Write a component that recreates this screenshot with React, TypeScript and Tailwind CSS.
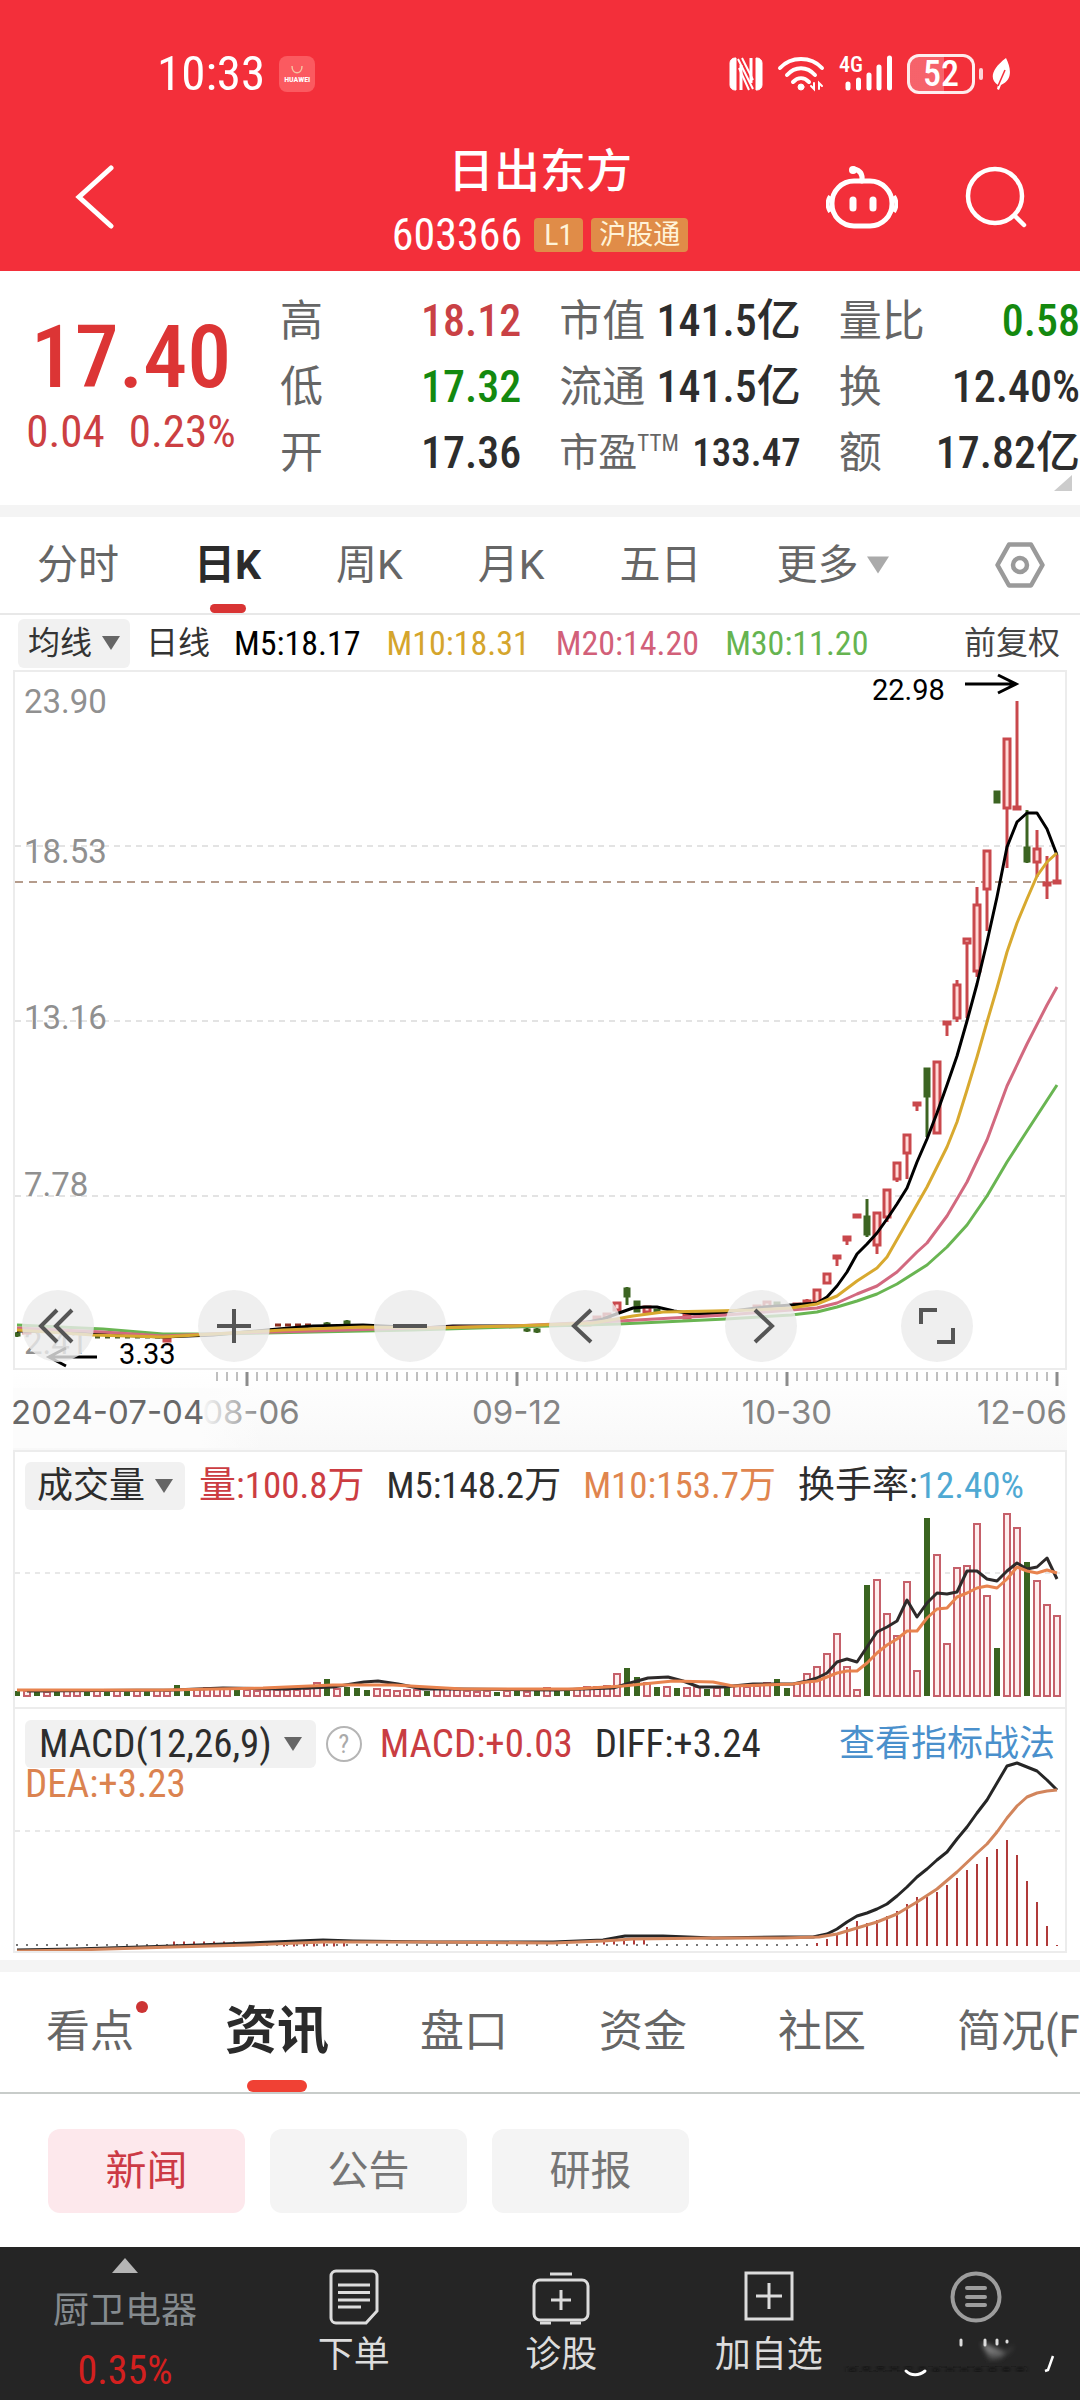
import type { ReactNode } from 'react'

type Candle = {
  n: number
  high: number
  top: number
  bottom: number
  low: number
  green?: boolean
}

// One slot per trading day, 10 units apart
const slot = (n: number) => 4 + n * 10

const candles: Candle[] = [
  { n: 0, high: 662, top: 663, bottom: 666, low: 667, green: true },
  { n: 1, high: 659, top: 660, bottom: 663, low: 664 },
  { n: 15, high: 667, top: 668, bottom: 671, low: 672 },
  { n: 31, high: 652, top: 653, bottom: 655, low: 656, green: true },
  { n: 33, high: 650, top: 651, bottom: 655, low: 656, green: true },
  { n: 51, high: 658, top: 659, bottom: 661, low: 662, green: true },
  { n: 52, high: 658, top: 659, bottom: 662, low: 663, green: true },
  { n: 57, high: 652, top: 652, bottom: 655, low: 655 },
  { n: 58, high: 646, top: 647, bottom: 650, low: 650 },
  { n: 59, high: 643, top: 644, bottom: 648, low: 649 },
  { n: 60, high: 632, top: 633, bottom: 640, low: 644 },
  { n: 61, high: 617, top: 618, bottom: 627, low: 635, green: true },
  { n: 62, high: 631, top: 631, bottom: 642, low: 642, green: true },
  { n: 63, high: 637, top: 637, bottom: 642, low: 643 },
  { n: 64, high: 639, top: 639, bottom: 643, low: 644, green: true },
  { n: 67, high: 644, top: 645, bottom: 648, low: 648 },
  { n: 74, high: 635, top: 636, bottom: 639, low: 639 },
  { n: 75, high: 631, top: 632, bottom: 637, low: 637 },
  { n: 76, high: 632, top: 632, bottom: 636, low: 636, green: true },
  { n: 78, high: 634, top: 634, bottom: 636, low: 636 },
  { n: 79, high: 629, top: 631, bottom: 634, low: 634 },
  { n: 80, high: 619, top: 620, bottom: 632, low: 633 },
  { n: 81, high: 603, top: 604, bottom: 613, low: 614 },
  { n: 82, high: 585, top: 586, bottom: 588, low: 596 },
  { n: 83, high: 566, top: 567, bottom: 570, low: 575 },
  { n: 84, high: 544, top: 545, bottom: 547, low: 547 },
  { n: 85, high: 529, top: 546, bottom: 565, low: 567, green: true },
  { n: 86, high: 542, top: 543, bottom: 575, low: 584 },
  { n: 87, high: 519, top: 520, bottom: 547, low: 552 },
  { n: 88, high: 492, top: 493, bottom: 509, low: 512 },
  { n: 89, high: 464, top: 465, bottom: 483, low: 509 },
  { n: 90, high: 432, top: 433, bottom: 435, low: 441 },
  { n: 91, high: 398, top: 398, bottom: 427, low: 467, green: true },
  { n: 92, high: 391, top: 392, bottom: 463, low: 464 },
  { n: 93, high: 351, top: 352, bottom: 354, low: 366 },
  { n: 94, high: 310, top: 315, bottom: 348, low: 352 },
  { n: 95, high: 268, top: 269, bottom: 273, low: 348 },
  { n: 96, high: 217, top: 235, bottom: 301, low: 307 },
  { n: 97, high: 180, top: 181, bottom: 219, low: 261 },
  { n: 98, high: 121, top: 121, bottom: 133, low: 133, green: true },
  { n: 99, high: 68, top: 69, bottom: 138, low: 198 },
  { n: 100, high: 31, top: 137, bottom: 139, low: 140 },
  { n: 101, high: 140, top: 177, bottom: 192, low: 193, green: true },
  { n: 102, high: 160, top: 179, bottom: 192, low: 207 },
  { n: 103, high: 186, top: 213, bottom: 215, low: 229 },
  { n: 104, high: 185, top: 211, bottom: 213, low: 213 },
]

const ma = {
  m5: '4,661 40,661 80,664 150,667 200,665 265,659 300,656 350,655 410,658 440,656 500,656 560,655 590,649 606,643 620,638 632,637 644,637 661,641 682,644 709,643 720,641 751,637 778,635 804,633 814,627 824,616 834,602 844,584 854,574 864,563 874,549 884,534 894,518 904,492 914,469 924,443 934,415 944,386 954,351 964,314 974,272 984,227 994,177 1004,152 1014,143 1024,143 1034,159 1044,185',
  m10: '4,660 80,665 150,667 200,664 270,660 350,657 420,658 500,656 580,653 620,646 650,642 700,641 740,640 778,638 804,634 824,626 844,611 864,598 874,587 894,552 914,517 934,477 944,452 954,420 964,387 974,352 984,318 994,282 1004,253 1014,229 1024,206 1034,192 1044,183',
  m20: '4,658 90,662 150,666 220,663 300,661 400,658 500,656 606,651 713,645 778,640 804,638 824,633 844,624 864,616 884,602 904,582 914,573 934,546 954,512 974,470 994,416 1014,374 1034,335 1044,317',
  m30: '4,655 90,659 150,664 200,664 300,662 400,660 500,657 606,654 713,649 778,645 804,642 824,637 844,631 864,624 884,614 914,595 934,577 954,555 974,526 994,492 1014,461 1044,415',
}

// Bar heights, oldest first
const earlyVolume = [
  5, 5, 5, 4, 5, 5, 6, 5, 5, 6, 6, 5, 5, 5, 6, 5, 11, 6, 7, 8, 7, 8, 6, 6, 5, 6, 6, 6, 6, 7, 13, 17,
  7, 9, 8, 6, 7, 6, 5, 6, 6, 5, 7, 7, 6, 5, 4, 5, 4, 5, 5, 4, 5,
]
const recentVolume = [
  8, 7, 8, 7, 9, 9, 10, 22, 28, 19, 13, 9, 9, 8, 8, 9, 7, 8, 9, 10, 9, 10, 13, 17, 8, 12, 22, 29, 42,
  62, 29, 6, 111, 116, 82, 60, 114, 25, 178, 141, 52, 128, 130, 172, 100, 48, 182, 168, 134, 115, 91, 80,
]
const volumes = [...earlyVolume, ...recentVolume]
const greenVolume = [
  0, 2, 4, 7, 9, 11, 13, 16, 17, 22, 31, 33, 34, 35, 41, 48, 50, 52, 54, 55, 61, 62, 64, 66, 69, 71, 76, 77, 85,
  91, 98, 101,
]

const macdBars = [3, 7, 11, 19, 25, 23, 26, 30, 35, 42, 49, 49, 54, 61, 68, 76, 82, 89, 97, 106, 91, 65, 44, 20, 1]

function StatusIcons() {
  return (
    <div className="flex items-center text-white">
      <svg className="h-9 w-[34px]" viewBox="0 0 34 36" fill="none" stroke="currentColor">
        <path d="M7 2H6a5 5 0 0 0-5 5v22a5 5 0 0 0 5 5h1zM27 2h1a5 5 0 0 1 5 5v22a5 5 0 0 1-5 5h-1z" fill="currentColor" strokeWidth="1" />
        <path d="M12 34V9M22 2v25" strokeWidth="3" />
        <path d="M9 3l15 30M13 2l11 22M10 12l10 22" strokeWidth="2" />
      </svg>
      <svg className="ml-3.5 h-9 w-12" viewBox="0 0 48 36" fill="none" stroke="currentColor" strokeWidth="4" strokeLinecap="round">
        <path d="M3 12C14 0 34 0 45 12" />
        <path d="M10 19c8-9 20-9 28 0" />
        <path d="M16 26c5-5 11-5 16 0" />
        <circle cx="24" cy="31" r="3" fill="currentColor" strokeWidth="1" />
        <path d="M37 27v6l-3-3M42 33v-6l3 3" strokeWidth="2" />
      </svg>
      <svg className="ml-3 h-12 w-14" viewBox="0 0 56 48" fill="none" stroke="currentColor" strokeWidth="5" strokeLinecap="round">
        <path d="M11 34v4M21.500 30v8M32 25v13M42 17v21M52.500 8v30" />
        <text x="2" y="22" fill="currentColor" stroke="none" className="font-['Roboto_Condensed',Roboto,sans-serif] text-[22px] font-medium">
          4G
        </text>
      </svg>
      <div className="ml-3.5 flex h-10 w-[68px] items-center justify-center rounded-xl border-3 border-white/90 bg-linear-to-r from-white/25 from-55% to-transparent to-55% text-[36px] leading-none font-medium">
        52
      </div>
      <div className="ml-1 h-3 w-1 rounded-full bg-white/80" />
      <svg className="ml-2 h-8 w-5" viewBox="0 0 20 32" fill="currentColor">
        <path d="M15 0c5 10 7 22-5 27l-2 5-2-1 1-4C-1 22-1 12 15 0z" />
        <path d="M7 28l7-16" stroke="#f32f3a" strokeWidth="1.500" />
      </svg>
    </div>
  )
}

function Header() {
  return (
    <header className="bg-[#f32f3a] text-white">
      <div className="flex items-center justify-between pt-12 pr-[69px] pb-[39px] pl-[157px]">
        <div className="flex items-center gap-3.5">
          <span className="text-[49px] leading-[52px]">10:33</span>
          <span className="flex h-9 w-9 flex-col items-center justify-center rounded-lg bg-[#fb5a60]">
            <svg className="h-3 w-4" viewBox="0 0 16 12" fill="none" stroke="#f6c3a0" strokeWidth="1.500">
              <path d="M3 3c0 9 10 9 10 0" />
            </svg>
            <span className="text-[8px] leading-[10px] font-bold">HUAWEI</span>
          </span>
        </div>
        <StatusIcons />
      </div>
      <div className="grid grid-cols-[1fr_auto_1fr] items-center pb-1">
        <a href="#back" aria-label="返回" className="justify-self-start pb-3 pl-[75px]">
          <svg className="h-16 w-10" viewBox="0 0 40 64" fill="none" stroke="currentColor" strokeWidth="5" strokeLinecap="round">
            <path d="M36 3L4 32l32 29" />
          </svg>
        </a>
        <div className="text-center">
          <h1 className="text-[46px] leading-16 font-medium">日出东方</h1>
          <div className="flex items-center justify-center gap-2 leading-16">
            <span className="mr-1 text-[44px]">603366</span>
            <span className="rounded-sm bg-[#e08c48] px-2.5 text-[30px] leading-[34px] text-[#fff3d8]">L1</span>
            <span className="rounded-sm bg-[#e08c48] px-2 text-[27px] leading-[34px] text-[#fff3d8]">沪股通</span>
          </div>
        </div>
        <div className="flex items-center gap-[66px] justify-self-end pr-[52px] pb-3">
          <button aria-label="助手">
            <svg className="h-16 w-[72px]" viewBox="0 0 72 64" fill="none" stroke="currentColor" strokeWidth="5">
              <rect x="6" y="16" width="60" height="45" rx="22" />
              <path d="M4 31c-3 5-3 11 0 16M68 31c3 5 3 11 0 16" strokeWidth="4" />
              <path d="M36 16c1-8-3-11-8-12" strokeLinecap="round" />
              <circle cx="27" cy="5" r="4" fill="currentColor" stroke="none" />
              <path d="M27 35v8M47 35v8" strokeWidth="7" strokeLinecap="round" />
            </svg>
          </button>
          <button aria-label="搜索">
            <svg className="h-16 w-16" viewBox="0 0 64 64" fill="none" stroke="currentColor" strokeWidth="4.500" strokeLinecap="round">
              <circle cx="31" cy="31" r="27" />
              <path d="M51 51l9 9" />
            </svg>
          </button>
        </div>
      </div>
    </header>
  )
}

function Quote({
  label,
  value,
  color = 'text-[#2d2d2d]',
  size = 'text-[44px]',
}: {
  label: ReactNode
  value: string
  color?: string
  size?: string
}) {
  return (
    <div className="flex items-center justify-between leading-[66px] whitespace-nowrap">
      <dt className="text-[43px] text-[#666]">{label}</dt>
      <dd className={`font-medium ${size} ${color}`}>{value}</dd>
    </div>
  )
}

function QuotePanel() {
  return (
    <section className="relative flex bg-white pb-[19px]">
      <div className="w-[262px] shrink-0 pt-[42px] text-center text-[#dc3535]">
        <div className="text-[88px] leading-[88px] font-medium">17.40</div>
        <div className="flex justify-center gap-6 text-[45px] leading-[62px] text-[#cc3f42]">
          <span>0.04</span>
          <span>0.23%</span>
        </div>
      </div>
      <div className="ml-[18px] grid flex-1 grid-cols-3 gap-x-[38px] pt-[17px]">
        <dl>
          <Quote label="高" value="18.12" color="text-[#c94145]" />
          <Quote label="低" value="17.32" color="text-[#14890f]" />
          <Quote label="开" value="17.36" />
        </dl>
        <dl>
          <Quote label="市值" value="141.5亿" />
          <Quote label="流通" value="141.5亿" />
          <Quote
            label={
              <span className="flex text-[39px]">
                市盈<span className="text-[23px] leading-[48px]">TTM</span>
              </span>
            }
            value="133.47"
            size="text-[39px]"
          />
        </dl>
        <dl>
          <Quote label="量比" value="0.58" color="text-[#14890f]" />
          <Quote label="换" value="12.40%" />
          <Quote label="额" value="17.82亿" />
        </dl>
      </div>
      <svg className="absolute right-2 bottom-3.5 h-4 w-[18px]" viewBox="0 0 18 16" fill="#ccc">
        <path d="M18 0v16H0z" />
      </svg>
    </section>
  )
}

function Down({ className }: { className: string }) {
  return (
    <svg className={className} viewBox="0 0 18 14" fill="currentColor">
      <path d="M0 0h18L9 14z" />
    </svg>
  )
}

function PeriodTabs() {
  return (
    <nav className="flex items-center border-b-2 border-[#e8e8e8] pr-[35px] pl-[37px] font-[Roboto,'Noto_Sans_CJK_SC',sans-serif] text-[41px] leading-[96px] text-[#666]">
      <div className="flex gap-[75px]">
        <button>分时</button>
        <button className="relative font-bold text-[#2b2b2b]">
          日K
          <span className="absolute bottom-0 left-1/2 h-[9px] w-9 -translate-x-1/2 rounded-full bg-[#d93434]" />
        </button>
        <button>周K</button>
        <button>月K</button>
        <button>五日</button>
        <button className="flex items-center gap-2">
          更多
          <Down className="h-[18px] w-[22px] text-[#aaa]" />
        </button>
      </div>
      <button aria-label="设置" className="ml-auto">
        <svg className="h-[46px] w-[50px]" viewBox="0 0 50 46" fill="none" stroke="#9a9a9a" strokeWidth="4.500" strokeLinejoin="round">
          <path d="M14 2.500h22L47.500 23 36 43.500H14L2.500 23z" />
          <circle cx="25" cy="23" r="7" />
        </svg>
      </button>
    </nav>
  )
}

function AverageRow() {
  return (
    <div className="flex items-center pt-px pr-5 pl-[18px] text-[34px] leading-[54px] whitespace-nowrap">
      <button className="flex h-[49px] items-center gap-2.5 rounded-md bg-[#f1f1f1] px-2.5 text-[32px] text-[#333]">
        均线
        <Down className="h-3.5 w-[18px] text-[#666]" />
      </button>
      <span className="mr-6 ml-4 text-[32px] text-[#333]">日线</span>
      <div className="flex gap-[26px]">
        <span className="text-black">M5:18.17</span>
        <span className="text-[#d5a52c]">M10:18.31</span>
        <span className="text-[#d26079]">M20:14.20</span>
        <span className="text-[#66b450]">M30:11.20</span>
      </div>
      <span className="ml-auto text-[32px] text-[#444]">前复权</span>
    </div>
  )
}

function CandleShape({ c }: { c: Candle }) {
  const x = slot(c.n)
  const color = c.green ? '#3c6422' : '#c9484c'
  return (
    <g>
      <line x1={x} x2={x} y1={c.high} y2={c.low} stroke={color} strokeWidth="3" />
      <rect
        x={x - 3}
        y={c.top}
        width="6"
        height={c.bottom - c.top}
        fill={c.green ? color : '#ffd9d6'}
        stroke={color}
        strokeWidth={c.green ? 1 : 3}
      />
    </g>
  )
}

function CircleButton({ label, children }: { label: string; children: ReactNode }) {
  return (
    <button aria-label={label} className="flex h-[72px] w-[72px] items-center justify-center rounded-full bg-[#ebebeb]/80 text-[#555]">
      <svg className="h-10 w-10" viewBox="0 0 40 40" fill="none" stroke="currentColor" strokeWidth="4">
        {children}
      </svg>
    </button>
  )
}

function KLineChart() {
  return (
    <div className="relative border-2 border-[#ececec]">
      <svg className="block w-full" viewBox="0 0 1050 696">
        <g stroke="#dadada" strokeWidth="1.500" strokeDasharray="6 5">
          <path d="M0 174H1050M0 349H1050M0 524H1050" />
        </g>
        <path d="M0 210H1050" stroke="#b59c8c" strokeWidth="2" strokeDasharray="8 6" />
        <g className="font-[Roboto,sans-serif] text-[33px]" fill="#909090">
          <text x="9" y="41">23.90</text>
          <text x="9" y="191">18.53</text>
          <text x="9" y="357">13.16</text>
          <text x="9" y="524">7.78</text>
          <text x="9" y="682">2.41</text>
        </g>
        <g transform="translate(-2 -2)">
          <path d="M82 667H148" stroke="#4c5b24" strokeWidth="3" strokeDasharray="5 5" />
          <path d="M262 655H300" stroke="#8c2f20" strokeWidth="3" strokeDasharray="6 4" />
          {candles.map((c) => (
            <CandleShape key={c.n} c={c} />
          ))}
          <g fill="none" strokeWidth="3" strokeLinejoin="round">
            <polyline points={ma.m5} stroke="#000" />
            <polyline points={ma.m30} stroke="#69b552" />
            <polyline points={ma.m20} stroke="#d2697f" />
            <polyline points={ma.m10} stroke="#d8a92f" />
          </g>
        </g>
        <g className="font-[Roboto,sans-serif] text-[29px]" fill="#000">
          <text x="857" y="28">22.98</text>
          <text x="104" y="692">3.33</text>
        </g>
        <g fill="none" stroke="#000" strokeWidth="3">
          <path d="M950 12H1000M983 3l18 9-18 9" />
          <path d="M82 685H34M51 676l-17 9 17 9" />
        </g>
      </svg>
      <div className="absolute right-[92px] bottom-[6px] left-[7px] flex justify-between">
        <CircleButton label="最早">
          <path d="M19 4L3 20l16 16M34 4L18 20l16 16" />
        </CircleButton>
        <CircleButton label="放大">
          <path d="M3 20h34M20 3v34" />
        </CircleButton>
        <CircleButton label="缩小">
          <path d="M3 20h34" />
        </CircleButton>
        <CircleButton label="向左">
          <path d="M26 4L9 20l17 16" />
        </CircleButton>
        <CircleButton label="向右">
          <path d="M14 4l17 16-17 16" />
        </CircleButton>
        <CircleButton label="全屏">
          <path d="M4 18V4h16M36 22v14H20" />
        </CircleButton>
      </div>
    </div>
  )
}

function DateAxis() {
  const ticks = Array.from({ length: 84 }, (_, i) => 204 + i * 10)
  return (
    <svg className="block w-full bg-linear-to-b from-white to-[#f8f8f8]" viewBox="0 0 1054 80">
      <defs>
        <linearGradient id="fade" x1="0" x2="1" y1="0" y2="0">
          <stop offset="0.75" stopColor="#fcfcfc" />
          <stop offset="1" stopColor="#fcfcfc" stopOpacity="0" />
        </linearGradient>
      </defs>
      {ticks.map((x) => (
        <line key={x} x1={x} x2={x} y1="2" y2="11" stroke="#aaa" strokeWidth="1.500" />
      ))}
      <path d="M234 2v14M504 2v14M774 2v14M1044 2v14" stroke="#8c8c8c" strokeWidth="3" />
      <g className="font-[Inter,sans-serif] text-[33px]" fill="#858585">
        <text x="238" y="54" textAnchor="middle">08-06</text>
        <text x="504" y="54" textAnchor="middle">09-12</text>
        <text x="774" y="54" textAnchor="middle">10-30</text>
        <text x="1054" y="54" textAnchor="end">12-06</text>
        <rect x="0" y="18" width="250" height="60" fill="url(#fade)" />
        <text x="-2" y="54" fill="#686868">2024-07-04</text>
      </g>
    </svg>
  )
}

function VolumePanel() {
  return (
    <div className="grid border-2 border-[#ececec]">
      <svg className="col-start-1 row-start-1 block w-full" viewBox="0 0 1050 255">
        <path d="M0 121H1050" stroke="#e8e8e8" strokeWidth="2" strokeDasharray="5 5" />
        <g transform="translate(-2 -2)">
          {volumes.map((h, n) =>
            greenVolume.includes(n) ? (
              <rect key={n} x={slot(n) - 3} y={246 - h} width="6" height={h} fill="#3a6420" />
            ) : (
              <rect key={n} x={slot(n) - 3} y={246 - h} width="6" height={h} fill="#fdeeee" stroke="#c5606a" strokeWidth="2" />
            ),
          )}
          <g fill="none" strokeWidth="3" strokeLinejoin="round">
            <polyline
              stroke="#2e2a2a"
              points="4,241 150,240 200,238 260,239 310,237 341,232 355,231 375,234 400,239 430,239 530,240 590,238 607,233 625,228 645,227 660,231 676,237 700,237 730,234 770,234 784,231 794,228 804,223 814,212 824,209 834,212 844,197 854,182 864,177 874,171 884,150 894,167 904,153 914,143 924,144 934,142 944,121 954,121 964,129 974,131 984,121 994,113 1004,119 1014,117 1024,108 1034,129"
              transform="translate(10 0)"
            />
            <polyline
              stroke="#e8834e"
              points="4,240 150,240 250,238 320,235 380,235 450,239 560,239 610,236 660,231 700,232 720,236 780,234 794,232 804,231 814,227 824,223 834,221 844,221 854,213 864,203 874,195 884,189 894,181 904,181 914,168 924,159 934,158 944,147 954,143 964,138 974,136 984,138 994,129 1004,117 1014,121 1024,123 1034,120 1044,123"
            />
          </g>
        </g>
      </svg>
      <div className="z-10 col-start-1 row-start-1 flex items-center self-start pt-2.5 pl-2.5 text-[37px] leading-12 whitespace-nowrap text-[#2d2d2d]">
        <button className="flex items-center gap-2.5 rounded-md bg-[#f1f1f1] px-3 text-[36px]">
          成交量
          <Down className="h-3.5 w-[18px] text-[#666]" />
        </button>
        <div className="ml-3.5 flex gap-[22px]">
          <span className="text-[#cc3d42]">量:100.8万</span>
          <span>M5:148.2万</span>
          <span className="text-[#e0854e]">M10:153.7万</span>
          <span>
            换手率:<span className="text-[#4fa9d3]">12.40%</span>
          </span>
        </div>
      </div>
    </div>
  )
}

function MacdPanel() {
  return (
    <div className="grid border-x-2 border-b-2 border-[#ececec]">
      <svg className="col-start-1 row-start-1 block w-full" viewBox="0 0 1050 242">
        <path d="M0 122H1050" stroke="#e8e8e8" strokeWidth="2" strokeDasharray="5 5" />
        <g transform="translate(-2 0)">
          <path d="M3 236H800" stroke="#777" strokeWidth="2" strokeDasharray="2 8" />
          {macdBars.map((h, i) => (
            <rect key={i} x={slot(80 + i) - 1} y={237 - h} width="2" height={h} fill="#b03a3a" />
          ))}
          <path d="M160 235h70M270 235h70M590 233h50" stroke="#b03a3a" strokeWidth="5" strokeDasharray="2 8" />
          <g fill="none" strokeWidth="3" strokeLinejoin="round">
            <polyline
              stroke="#262626"
              points="4,241 62,240 160,237 235,234 310,231 340,232 420,233 540,233 590,231 612,227 650,227 700,229 770,228 800,228 814,225 824,220 834,213 844,207 854,204 864,200 874,195 884,187 894,178 904,168 914,160 924,151 934,143 944,130 954,118 964,104 974,91 984,74 994,57 1004,54 1014,58 1024,62 1034,71 1044,81"
            />
            <polyline
              stroke="#d2855c"
              points="4,242 62,241 160,238 235,236 310,233 420,233 540,234 590,232 620,230 700,229 770,229 806,228 824,225 844,219 864,213 884,205 904,193 924,180 944,163 964,144 974,135 984,123 994,109 1004,97 1014,88 1024,84 1034,82 1044,81"
            />
          </g>
        </g>
      </svg>
      <div className="z-10 col-start-1 row-start-1 self-start pt-[11px] pr-2.5 pl-2.5 text-[39px] whitespace-nowrap text-[#2d2d2d]">
        <div className="flex items-center leading-12">
          <button className="flex items-center gap-3 rounded-md bg-[#f1f1f1] px-3.5">
            MACD(12,26,9)
            <Down className="h-3.5 w-[18px] text-[#666]" />
          </button>
          <button className="ml-2.5 flex h-9 w-9 items-center justify-center rounded-full border-2 border-[#b5b5b5] text-[26px] leading-none text-[#aaa]">
            ?
          </button>
          <span className="ml-[18px] text-[#c93d42]">MACD:+0.03</span>
          <span className="ml-[22px]">DIFF:+3.24</span>
          <a href="#strategy" className="ml-auto text-[36px] text-[#4a90cc]">
            查看指标战法
          </a>
        </div>
        <div className="leading-8 text-[#db8350]">DEA:+3.23</div>
      </div>
    </div>
  )
}

function InfoTabs() {
  return (
    <nav className="flex items-center gap-[91px] overflow-hidden border-b-2 border-[#c8ccca] pl-[46px] text-[44px] leading-[120px] whitespace-nowrap text-[#666]">
      <button className="relative">
        看点
        <span className="absolute top-[29px] -right-[14px] h-3 w-3 rounded-full bg-[#cc3434]" />
      </button>
      <button className="relative text-[52px] font-bold text-[#2b2b2b]">
        资讯
        <span className="absolute bottom-0 left-1/2 h-3 w-[60px] -translate-x-1/2 rounded-full bg-[#f04134]" />
      </button>
      <button>盘口</button>
      <button>资金</button>
      <button>社区</button>
      <button>简况(F10)</button>
    </nav>
  )
}

function BottomBar() {
  return (
    <footer className="grid grid-cols-[250px_repeat(4,1fr)] bg-[#252525] text-[36px] text-[#dcdcdc]">
      <a href="#sector" className="flex flex-col items-center pt-[11px] text-[#858b8f]">
        <svg className="h-[15px] w-[26px]" viewBox="0 0 26 15" fill="#b5b5b5">
          <path d="M13 0l13 15H0z" />
        </svg>
        <span className="mt-2 leading-[60px]">厨卫电器</span>
        <span className="text-[40px] leading-[59px] text-[#d3201f]">0.35%</span>
      </a>
      <a href="#order" className="flex flex-col items-center pt-[22px]">
        <svg className="h-14 w-[50px]" viewBox="0 0 50 56" fill="none" stroke="currentColor" strokeWidth="3">
          <path d="M7 2h36a5 5 0 0 1 5 5v35L37 54H7a5 5 0 0 1-5-5V7a5 5 0 0 1 5-5z" />
          <path d="M9 16h32M9 23.500h32M9 31h32M9 38h23" />
        </svg>
        <span className="mt-1 leading-[52px]">下单</span>
      </a>
      <a href="#diagnose" className="flex flex-col items-center pt-[22px]">
        <svg className="h-14 w-[58px]" viewBox="0 0 58 56" fill="none" stroke="currentColor" strokeWidth="3">
          <rect x="2" y="11" width="54" height="40" rx="6" />
          <path d="M18 5h22M8 54h11M38 54h11" />
          <path d="M29 21v20M19 31h20" />
        </svg>
        <span className="mt-1 leading-[52px]">诊股</span>
      </a>
      <a href="#watch" className="flex flex-col items-center pt-[22px]">
        <svg className="h-14 w-[50px]" viewBox="0 0 50 56" fill="none" stroke="currentColor" strokeWidth="3">
          <rect x="2" y="4" width="46" height="46" />
          <path d="M25 14v26M12 27h26" />
        </svg>
        <span className="mt-1 leading-[52px]">加自选</span>
      </a>
      <a href="#more" aria-label="功能" className="relative flex flex-col items-center pt-6">
        <svg className="h-[52px] w-[52px]" viewBox="0 0 52 52" fill="none" stroke="#9d9d9d" strokeWidth="4">
          <circle cx="26" cy="26" r="23.500" />
          <path d="M17 17h18M17 26h18M17 34h18" strokeLinecap="round" />
        </svg>
        <svg className="absolute top-[84px] right-0 h-12 w-60" viewBox="0 0 240 48" fill="none">
          <defs>
            <filter id="soft">
              <feGaussianBlur stdDeviation="2.500" />
            </filter>
            <linearGradient id="glow" x1="0" x2="0" y1="0" y2="1">
              <stop offset="0" stopColor="#aaa" />
              <stop offset="1" stopColor="#333" />
            </linearGradient>
          </defs>
          <path d="M8 40c30-6 60-4 84-1 30 3 70-2 96 0" stroke="#191919" strokeWidth="6" strokeDasharray="9 5" filter="url(#soft)" />
          <path d="M142 12l8 18 10-2 14-14-6 8z" fill="url(#glow)" filter="url(#soft)" />
          <path d="M121 9v5M145 9v5M157 9v4M167 10v1" stroke="#ddd" strokeWidth="3" strokeLinecap="round" />
          <path d="M66 40c5 5 13 5 19 0" stroke="#fff" strokeWidth="3" strokeLinecap="round" />
          <path d="M213 25l-5 14-3 1" stroke="#fff" strokeWidth="2.500" />
        </svg>
      </a>
    </footer>
  )
}

export default function App() {
  return (
    <div className="min-h-screen bg-white font-['Roboto_Condensed',Roboto,'Noto_Sans_CJK_SC',sans-serif]">
      <Header />
      <QuotePanel />
      <div className="h-3 bg-[#f4f4f4]" />
      <PeriodTabs />
      <AverageRow />
      <main className="px-[13px]">
        <KLineChart />
        <DateAxis />
        <VolumePanel />
        <MacdPanel />
      </main>
      <div className="mt-[7px] h-3 bg-[#f4f4f4]" />
      <InfoTabs />
      <div className="flex gap-[25px] px-12 pt-[35px] pb-[34px] text-[41px] leading-[84px] text-[#757575]">
        <button className="w-[197px] rounded-xl bg-[#fde8ec] text-[#cc3a45]">新闻</button>
        <button className="w-[197px] rounded-xl bg-[#f4f4f4]">公告</button>
        <button className="w-[197px] rounded-xl bg-[#f4f4f4]">研报</button>
      </div>
      <BottomBar />
    </div>
  )
}
